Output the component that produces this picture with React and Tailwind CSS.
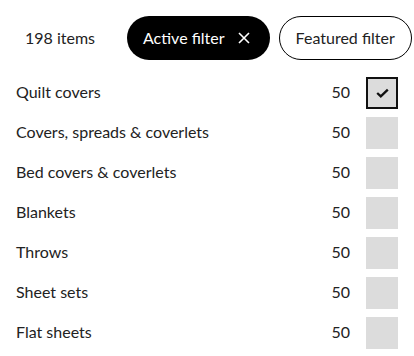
import React, { useState } from 'react'

const categories = [
  { name: 'Quilt covers', count: 50, checked: true },
  { name: 'Covers, spreads & coverlets', count: 50 },
  { name: 'Bed covers & coverlets', count: 50 },
  { name: 'Blankets', count: 50 },
  { name: 'Throws', count: 50 },
  { name: 'Sheet sets', count: 50 },
  { name: 'Flat sheets', count: 50 },
]

function CheckBox({ checked }) {
  return (
    <div
      className={
        'flex h-8 w-8 items-center justify-center bg-[#dcdcdc] ' +
        (checked ? 'border-2 border-[#111]' : '')
      }
    >
      {checked && (
        <svg width="13" height="10" viewBox="0 0 13 10" fill="none">
          <path d="M1.2 5 L4.8 8.4 L11.8 1.6" stroke="#111" strokeWidth="2.3" />
        </svg>
      )}
    </div>
  )
}

export default function App() {
  const [items] = useState(categories)

  return (
    <div className="w-[414px] h-[356px] overflow-hidden bg-white text-[#222] font-['Lato',sans-serif]">
      <div className="flex items-center pt-4 pl-[25px]">
        <span className="text-base w-[102px]">198 items</span>
        <button className="flex h-11 items-center rounded-full bg-black pl-4 pr-5 text-base text-white">
          Active filter
          <svg className="ml-[13px]" width="12" height="12" viewBox="0 0 12 12">
            <path d="M1 1 L11 11 M11 1 L1 11" stroke="#fff" strokeWidth="1.6" />
          </svg>
        </button>
        <button className="ml-[9px] flex h-11 items-center rounded-full border border-black px-4 text-base">
          Featured filter
        </button>
      </div>

      <ul className="mt-[13px]">
        {items.map((item) => (
          <li key={item.name} className="flex h-10 items-center pl-4 pr-4">
            <span className="flex-1 text-base leading-none pb-[2px]">{item.name}</span>
            <span className="mr-4 text-base leading-none pb-[2px]">{item.count}</span>
            <CheckBox checked={item.checked} />
          </li>
        ))}
      </ul>
    </div>
  )
}
